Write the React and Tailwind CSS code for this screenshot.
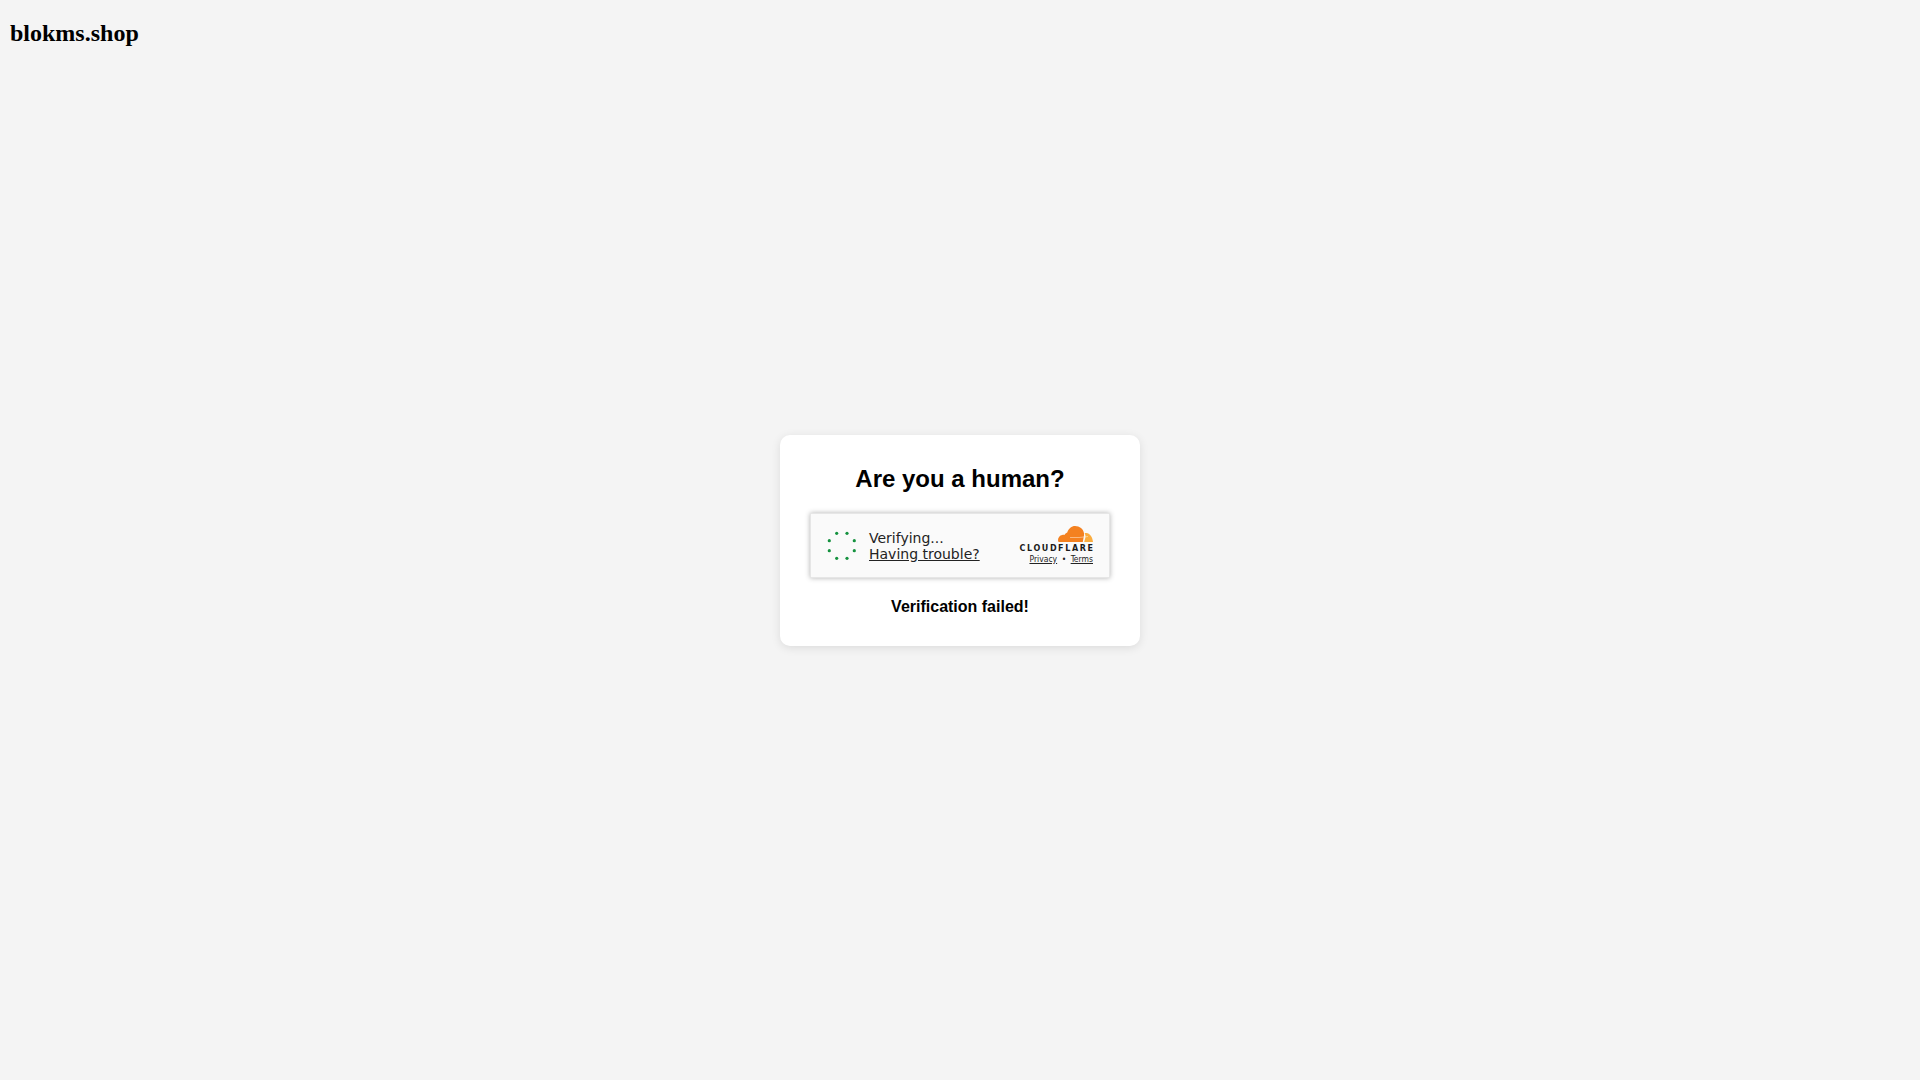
const DOTS = [
  [9.7, 2.3],
  [20, 2.3],
  [27.3, 9.7],
  [27.3, 19.7],
  [20, 27.3],
  [9.7, 27.3],
  [2.3, 19.7],
  [2.3, 9.7],
];

function Spinner() {
  return (
    <svg width="30" height="30" viewBox="0 0 30 30" className="shrink-0">
      {DOTS.map(([cx, cy]) => (
        <circle key={`${cx}-${cy}`} cx={cx} cy={cy} r="1.6" fill="#15923f" />
      ))}
    </svg>
  );
}

function Cloud() {
  return (
    <svg width="35" height="16" viewBox="0 0 35 16" className="block">
      <path
        d="M24.8 16 H0.5 C0.2 15.4 0 14.7 0 14 C0 11.4 1.8 9.4 4.2 9 C5 8.8 5.8 8.8 6.4 9 C7 7.6 8 6.8 9.2 6.4 C10.6 2.6 13.6 0 17 0 C21.6 0 25.4 3 26 7.2 C26.2 8.4 26 9.8 25.7 11 Z"
        fill="#f48120"
      />
      <path
        d="M26.6 7.2 C27.2 7 27.8 7 28.4 7 C31.8 7.4 34.6 11 35 16 H26.2 L27.4 11.6 C27.7 10 27.4 8.4 26.6 7.2 Z"
        fill="#faad3f"
      />
      <path d="M12 11.4 L30 10.4 L30 11 L12 11.9 Z" fill="#fff1e0" />
    </svg>
  );
}

export default function App() {
  return (
    <div className="h-screen grid grid-rows-[1fr_auto_1fr] bg-[#f4f4f4] text-black font-['Liberation_Sans',Arial,sans-serif]">
      <div>
        <h1 className="px-[10px] pt-[19px] text-[24px] font-bold leading-[28px] font-['Liberation_Serif','Times_New_Roman',serif]">
          blokms.shop
        </h1>
      </div>

      <div className="w-[360px] mx-auto p-[30px] bg-white rounded-[10px] shadow-[0_2px_10px_rgba(0,0,0,0.1)] text-center">
        <h2 className="text-[24px] font-bold leading-[28px] mb-5">Are you a human?</h2>

        {/* CAPTCHA WIDGET */}
        <div className="h-[65px] w-[300px] flex items-center bg-[#fafafa] border border-[#e6e6e6] shadow-[0_0_5px_rgba(0,0,0,0.3)] text-left font-['DejaVu_Sans',sans-serif]">
          <div className="ml-4 mr-3 mt-[1px]">
            <Spinner />
          </div>
          <div className="text-[14px] leading-4 text-[#232323] mt-[1px]">
            <div>Verifying...</div>
            <a href="#" className="underline">Having trouble?</a>
          </div>
          <div className="ml-auto mr-4 flex flex-col items-end">
            <Cloud />
            <div className="mt-[2px] -mr-[1.5px] text-[8px] leading-[10px] font-bold tracking-[1.6px] text-[#1a1a1a]">
              CLOUDFLARE
            </div>
            <div className="text-[8.5px] leading-[10px] text-[#232323] flex gap-[4.5px] [font-stretch:condensed]">
              <a href="#" className="underline">Privacy</a>
              <span>•</span>
              <a href="#" className="underline">Terms</a>
            </div>
          </div>
        </div>

        <p className="mt-5 text-[16px] font-bold leading-[18px]">Verification failed!</p>
      </div>

      <div />
    </div>
  );
}
